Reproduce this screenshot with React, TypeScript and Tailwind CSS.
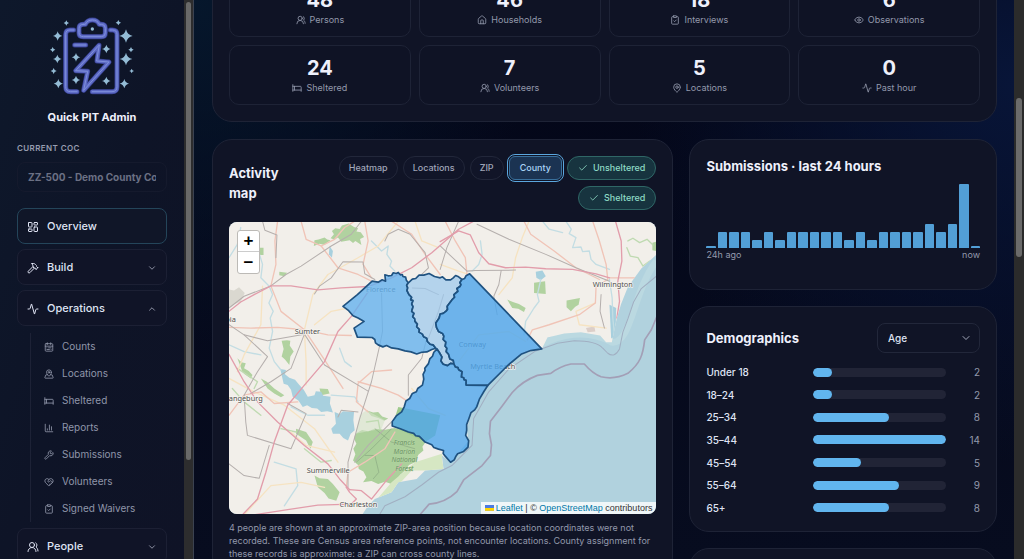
import React from 'react'
import {
  Activity,
  Bed,
  CalendarRange,
  ChartColumn,
  Check,
  ChevronDown,
  ChevronUp,
  ClipboardCheck,
  Eye,
  Hammer,
  HeartHandshake,
  House,
  LayoutDashboard,
  MapPin,
  MapPinned,
  UsersRound,
  Wrench,
  type LucideIcon,
} from 'lucide-react'

interface Stat {
  value: number
  label: string
  icon: LucideIcon
}

const stats: Stat[] = [
  { value: 48, label: 'Persons', icon: UsersRound },
  { value: 46, label: 'Households', icon: House },
  { value: 18, label: 'Interviews', icon: ClipboardCheck },
  { value: 6, label: 'Observations', icon: Eye },
  { value: 24, label: 'Sheltered', icon: Bed },
  { value: 7, label: 'Volunteers', icon: UsersRound },
  { value: 5, label: 'Locations', icon: MapPin },
  { value: 0, label: 'Past hour', icon: Activity },
]

const operations: { label: string; icon: LucideIcon }[] = [
  { label: 'Counts', icon: CalendarRange },
  { label: 'Locations', icon: MapPinned },
  { label: 'Sheltered', icon: Bed },
  { label: 'Reports', icon: ChartColumn },
  { label: 'Submissions', icon: Wrench },
  { label: 'Volunteers', icon: HeartHandshake },
  { label: 'Signed Waivers', icon: ClipboardCheck },
]

const hourly = [0, 2, 2, 2, 1, 2, 1, 2, 2, 2, 2, 2, 1, 2, 1, 2, 2, 2, 2, 3, 2, 3, 8, 0]

const ages = [
  { label: 'Under 18', count: 2 },
  { label: '18–24', count: 2 },
  { label: '25–34', count: 8 },
  { label: '35–44', count: 14 },
  { label: '45–54', count: 5 },
  { label: '55–64', count: 9 },
  { label: '65+', count: 8 },
]

const Sparkle = ({ x, y, r }: { x: number; y: number; r: number }) => (
  <path
    transform={`translate(${x} ${y}) scale(${r})`}
    d="M0-1Q.18-.18 1 0Q.18.18 0 1Q-.18.18-1 0Q-.18-.18 0-1Z"
  />
)

const Logo = () => (
  <svg viewBox="150 48 252 234" className="h-[78px] w-[84px]" fill="none" aria-hidden="true">
    {[
      { color: '#343d8c', width: 15 },
      { color: '#5d6ac4', width: 11 },
      { color: '#7f90dc', width: 3 },
    ].map(({ color, width }) => (
      <g key={color} stroke={color} strokeWidth={width} strokeLinecap="round" strokeLinejoin="round">
        <path d="M221 87H210Q197 87 197 100V257Q197 272 212 272H231" />
        <path d="M331 87H337Q351 87 351 100V257Q351 272 336 272H277" />
        <path d="M250 70H256Q262 57 277 57Q292 57 298 70H304Q316 70 316 82V95Q316 107 304 107H250Q237 107 237 95V82Q237 70 250 70Z" />
        <path d="M297 133L227 209L263 211L251 268L327 183L291 180Z" />
        <path d="M224 132H257" />
      </g>
    ))}
    <g fill="#94bcd6">
      <circle cx="277" cy="84" r="5" />
      <Sparkle x={173} y={105} r={14} />
      <Sparkle x={378} y={105} r={20} />
      <Sparkle x={172} y={174} r={13} />
      <Sparkle x={378} y={174} r={19} />
      <Sparkle x={175} y={248} r={14} />
      <Sparkle x={373} y={248} r={14} />
      <Sparkle x={228} y={169} r={13} />
      <Sparkle x={319} y={144} r={13} />
      <Sparkle x={228} y={237} r={13} />
      <Sparkle x={319} y={240} r={13} />
      <Sparkle x={199} y={66} r={8} />
      <Sparkle x={355} y={65} r={8} />
      <Sparkle x={158} y={146} r={8} />
      <Sparkle x={393} y={146} r={8} />
      <Sparkle x={161} y={210} r={9} />
      <Sparkle x={395} y={210} r={7} />
    </g>
  </svg>
)

interface NavButtonProps {
  label: string
  icon: LucideIcon
  active?: boolean
  chevron?: 'up' | 'down'
}

const NavButton: React.FC<NavButtonProps> = ({ label, icon: Icon, active = false, chevron }) => (
  <button
    type="button"
    className={`flex h-9 w-full shrink-0 items-center gap-2 rounded-lg border px-[9px] pt-px text-left text-[11px] font-medium text-[#dfe3f3] ${
      active ? 'border-[#24455a] bg-[#101628]' : 'border-[#1c2034] bg-[#101427]'
    }`}
  >
    <Icon className="size-3" strokeWidth={2} />
    <span className="flex-1">{label}</span>
    {chevron === 'down' && <ChevronDown className="size-[10px] text-[#a3a8ba]" />}
    {chevron === 'up' && <ChevronUp className="size-[10px] text-[#a3a8ba]" />}
  </button>
)

const Sidebar = () => (
  <aside className="flex w-[184px] shrink-0 flex-col overflow-hidden bg-linear-to-br from-[#0e182b] via-[#0e1427] to-[#0f1326] px-[17px] pt-[17px]">
    <div className="flex flex-col items-center">
      <Logo />
      <p className="mt-[14px] text-[11px] leading-4 font-bold text-[#eef0fb]">Quick PIT Admin</p>
    </div>
    <label htmlFor="coc" className="mt-[17px] text-[8px] leading-3 font-semibold tracking-wider text-[#979db0]">
      CURRENT COC
    </label>
    <select
      id="coc"
      disabled
      className="mt-2 h-[30px] w-full shrink-0 appearance-none rounded-lg border border-[#151a2d] bg-transparent px-[10px] text-[10px] font-bold text-[#6b7084] opacity-100"
    >
      <option>ZZ-500 - Demo County CoC</option>
    </select>
    <nav className="mt-4 flex flex-col gap-[5px]">
      <NavButton label="Overview" icon={LayoutDashboard} active />
      <NavButton label="Build" icon={Hammer} chevron="down" />
      <NavButton label="Operations" icon={Activity} chevron="up" />
      <ul className="mt-[2px] mb-px ml-[13px] border-l border-[#1d2236]">
        {operations.map(({ label, icon: Icon }) => (
          <li key={label}>
            <a href="#" className="flex h-[27px] items-center gap-2 pl-[13px] text-[10px] text-[#9096aa]">
              <Icon className="size-[10px]" strokeWidth={2} />
              {label}
            </a>
          </li>
        ))}
      </ul>
      <NavButton label="People" icon={UsersRound} chevron="down" />
    </nav>
  </aside>
)

const roads = {
  motorway: [
    'M15 290L50 262L90 240L140 214L200 214L280 226L350 220L430 216L500 190L560 160L620 115L660 80L700 45L745 21',
    'M645 82L700 50L735 62L760 115L790 148L840 160L900 158L960 163L1040 165L1110 178L1150 190',
    'M55 897L100 850L125 770L150 680L190 570L240 510L300 440L340 350L380 305L430 232',
    'M15 418L60 500L100 560L160 620L240 690L310 745L345 790L375 822',
    'M1168 21L1185 80L1187 140L1175 200L1180 260L1172 310',
    'M375 822L410 825L440 850L480 800L530 745',
    'M365 815L375 830L395 850L380 865L280 868L200 880L90 897',
  ],
  primary: [
    'M160 21L152 80L155 150L140 214L170 290L240 345L300 435L355 520',
    'M230 21L245 75L290 95L340 160L400 180L440 200',
    'M15 338L80 340L160 338L240 345L310 360L380 362',
    'M420 21L430 80L415 150L440 190',
    'M290 95L330 75L360 40L390 21',
    'M895 21L915 60L985 110L1050 160L1120 195',
    'M1100 21L1120 80L1140 150L1145 195L1110 215L1108 265L1060 300L970 330L920 345L905 375',
    'M1150 190L1230 190L1260 160L1290 130',
    'M15 600L60 540L110 530L150 565L220 560',
    'M500 465L440 470L400 505L395 560L430 590',
    'M500 21L560 60L600 120L645 180',
    'M660 21L690 80L720 130L725 180',
    'M365 815L370 770L420 740L480 700L510 650',
    'M400 500L470 520L520 540L550 560',
  ],
  secondary: [
    'M240 345L265 240L310 180L400 130L460 95L520 21',
    'M240 350L245 440L245 510',
    'M15 490L90 530L180 570L270 640L340 740',
    'M270 330L320 290L370 280',
    'M60 897L140 810L230 800L300 815',
    'M200 650L245 690L330 710',
    'M115 215L110 330L60 420L40 470',
    'M910 21L890 70L870 130L860 190L820 240',
    'M1108 265L1050 290L1060 330L1140 340',
    'M700 440L760 360L850 350L900 380',
    'M560 520L610 580L660 600',
    'M645 150L700 170L730 180',
    'M570 21L590 80L640 100',
  ],
  rail: [
    'M115 21L122 48L158 62L155 130',
    'M140 214L185 180L230 155L320 95L380 60L410 21',
    'M15 280L60 245L140 214',
    'M15 330L60 360L130 425L100 470L60 540L65 620L70 660L200 700L245 595L190 565',
    'M60 360L130 378L240 358L300 450L430 528',
    'M240 358L200 460L140 500L80 535',
    'M465 390L440 500L405 610L370 740L370 815',
    'M605 370L590 430L550 480L550 540',
    'M480 80L490 60L520 45L555 60L600 115L610 160L590 180',
    'M270 238L285 215L320 190L355 142L415 143L420 178L450 195',
    'M645 165L665 100L700 21',
    'M755 30L850 75L960 120L1050 160L1150 200',
    'M645 95L725 170L750 168L870 167',
    'M827 168L820 210L805 245L815 300',
    'M1125 240L1122 290L1135 340',
    'M340 605L350 585L400 590',
    'M470 235L473 350L465 390',
    'M15 745L60 780L105 788L135 690',
    'M500 620L430 690L390 740',
    'M562 220L600 222L640 240',
    'M655 240L640 290L610 370',
  ],
  river: [
    'M135 215L145 240L134 265L147 290L138 310L145 350L135 400L150 440L170 465',
    'M100 100L115 150L110 190L135 215',
    'M440 80L470 110L490 95L486 120L500 140L495 155L510 170',
    'M765 80L770 120L760 150L740 170',
    'M1020 21L1036 45L1030 58L1050 70L1040 100L1065 98L1070 112L1090 110L1095 135L1110 150L1150 165',
    'M950 21L970 45L1010 55',
    'M1150 195L1158 250L1160 310L1165 360',
    'M945 195L935 240L940 260L925 280L900 320L895 360',
    'M15 390L60 410L110 420',
    'M345 400L360 440L380 455',
    'M200 575L250 600L300 600',
    'M150 740L215 760L220 810L180 870',
    'M320 540L390 545L400 560',
    'M15 130L40 90L50 40',
  ],
}

const greens = [
  'M322 50L332 42L345 44L352 34L372 28L388 38L400 42L395 52L408 54L418 68L406 74L410 92L392 80L385 86L375 78L350 82L340 70L330 76L318 72L328 60Z',
  'M270 78L282 76L300 70L308 76L318 78L306 86L300 92L285 88L268 95Z',
  'M103 100L118 100L118 122L103 122Z',
  'M172 378L188 376L198 378L196 392L208 410L198 425L195 450L182 434L172 425L178 402Z',
  'M165 172L188 175L180 185L165 182Z',
  'M925 205L958 200L960 238L925 235Z',
  'M1022 258L1062 250L1058 270L1048 276L1035 290L1022 278Z',
  'M845 255L862 262L880 268L900 280L895 292L878 282L860 280Z',
  'M215 640L245 650L265 680L258 700L245 675L215 655Z',
  'M270 780L285 788L310 790L325 805L345 830L335 855L312 848L300 832L280 815Z',
  'M40 430L52 442L65 445L60 460L74 468L85 480L80 490L62 478L55 470Z',
  'M110 490L128 500L150 520L180 540L170 546L150 535L130 520Z',
  'M425 585L445 592L460 590L472 604L490 610L478 616L460 608L440 602Z',
  'M1278 85L1290 82L1290 110L1278 108Z',
  'M285 520L310 522L315 535L290 540Z',
]

const counties = [
  {
    name: 'Florence',
    fill: '#64b1ed',
    opacity: 0.8,
    d: 'M480 181L490 184L500 183L505 175L514 177L520 174L526 181L532 180L534 186L542 188L544 197L550 205L545 212L548 220L546 228L552 240L560 248L557 255L564 258L560 268L564 276L560 290L567 296L563 306L569 312L570 320L577 328L575 336L583 344L582 352L592 358L596 366L605 370L607 380L615 388L624 390L632 400L620 404L605 411L590 412L575 417L558 411L540 408L520 402L500 399L485 392L474 396L460 390L452 384L450 374L442 368L398 367L388 340L418 320L400 310L385 303L372 288L355 275L398 240L442 200L460 203L472 196L482 200Z',
  },
  {
    name: 'Marion',
    fill: '#9bc8ed',
    opacity: 0.72,
    d: 'M550 205L562 194L572 192L582 182L596 182L612 177L628 186L645 190L652 187L662 196L676 196L684 190L691 183L700 187L710 195L704 204L707 210L704 216L695 222L698 230L686 240L688 248L680 256L666 275L667 284L662 290L654 296L645 298L642 310L632 325L634 338L640 350L652 356L656 364L654 374L662 382L660 394L665 400L663 410L670 418L674 432L684 436L686 447L676 445L667 452L654 448L647 438L650 426L642 412L634 404L632 400L624 390L615 388L607 380L605 370L596 366L592 358L582 352L583 344L575 336L577 328L570 320L569 312L563 306L567 296L560 290L564 276L560 268L564 258L557 255L560 248L552 240L546 228L548 220L545 212Z',
  },
  {
    name: 'Horry',
    fill: '#4fa6ec',
    opacity: 0.82,
    d: 'M733 178L948 402L915 407L888 417L848 450L787 511L722 510L722 496L716 494L715 488L708 486L710 470L700 464L698 458L690 456L686 447L684 436L674 432L670 418L663 410L665 400L660 394L662 382L654 374L656 364L652 356L640 350L634 338L632 325L642 310L645 298L654 296L662 290L667 284L666 275L680 256L688 248L686 240L698 230L695 222L704 216L707 210L704 204L710 195L718 192L722 184Z',
  },
  {
    name: 'Georgetown',
    fill: '#4fa6ec',
    opacity: 0.8,
    d: 'M636 402L626 412L622 424L614 432L610 446L599 460L600 466L594 478L596 492L592 510L578 520L574 530L562 535L554 550L543 557L538 574L530 590L514 602L502 619L502 632L526 640L550 650L566 654L572 661L583 663L600 680L620 688L626 696L640 701L655 705L654 714L660 722L676 740L687 733L692 722L697 715L715 708L728 695L730 676L721 660L724 645L724 628L730 612L737 592L748 584L754 575L762 552L775 530L787 511L722 510L722 496L716 494L715 488L708 486L710 470L700 464L698 458L690 456L686 447L676 445L667 452L654 448L647 438L650 426L642 412Z',
  },
]

const MapCanvas = () => (
  <svg viewBox="15 21 1275 876" preserveAspectRatio="xMidYMid slice" className="block h-[292px] w-full" role="img" aria-label="County activity map">
    <defs>
      <clipPath id="land">
        <path d="M0 0H1300V112L1245 162L1205 217L1185 267L1172 310L1157 382L1140 382L1122 362L1065 352L1015 356L965 368L948 402L888 417L848 450L787 511L762 552L737 592L724 645L730 676L697 715L676 740L650 720L655 760L600 765L575 790L520 800L500 830L450 850L430 870L410 900H0Z" />
      </clipPath>
    </defs>
    <rect width="1300" height="900" fill="#b1d2de" />
    <path d="M1290 140C1220 230 1215 390 1157 382C1080 340 1000 360 945 390" stroke="#bbd9e1" strokeWidth="20" fill="none" />
    <g clipPath="url(#land)">
      <rect width="1300" height="900" fill="#f2efea" />
      <g fill="#b1d2a0">
        {greens.map((d) => (
          <path key={d} d={d} />
        ))}
      </g>
      <path
        d="M392 655L412 644L430 648L450 640L480 643L510 638L535 644L560 655L580 664L600 682L592 694L595 705L580 718L570 740L552 748L540 765L525 778L518 794L500 805L480 798L460 805L440 796L415 800L425 785L416 768L402 760L400 748L385 735L392 716L386 700L395 685L388 670Z"
        fill="#acd09b"
      />
      <path d="M392 655L405 600L425 585L480 615L470 640Z" fill="#d3e2c8" opacity=".6" />
      <path d="M570 740L650 715L655 765L560 765L500 830L440 870L500 800Z" fill="#d6e7c3" />
      <path d="M420 720L450 720L462 770L445 790M450 640L500 680L570 700M395 740L440 700L500 640" stroke="#8aa883" strokeWidth="2" fill="none" />
      <path d="M15 225L30 228L45 218L62 235L56 248L50 262L30 268L15 280Z" fill="#dad8d0" />
      <path d="M1080 340L1105 335L1108 350L1085 352Z" fill="#dccfc9" />
      <path d="M520 575L645 600L630 660L600 680L502 632Z" fill="#9fca8c" />
      <g fill="#a8d0de">
        <path d="M168 462L185 465L182 478L195 488L212 494L225 510L238 524L250 545L270 540L274 528L290 530L296 542L318 545L316 565L325 592L308 588L290 590L278 580L262 578L248 570L235 575L222 556L205 545L200 524L190 510L178 506Z" />
        <path d="M330 590L345 596L355 588L388 590L386 615L390 645L378 655L370 675L356 668L345 655L325 655L320 640L334 625Z" />
        <path d="M930 172L950 168L960 185L945 197L932 190Z" />
        <path d="M1150 270L1170 280L1168 370L1155 370Z" />
        <path d="M315 95L325 110L322 130L313 120Z" />
      </g>
      <g fill="none" strokeLinejoin="round" strokeLinecap="round">
        <g stroke="#c3dde3" strokeWidth="4">
          {roads.river.map((d) => (
            <path key={d} d={d} />
          ))}
        </g>
        <path
          d="M1205 80L1220 72L1240 85L1262 75L1280 92M1202 100L1212 125L1235 130L1250 155L1270 140L1285 150M25 520L60 560L110 600M40 460L100 500L90 520M240 700L290 740L320 735M170 640L215 650M425 620L460 615L465 640"
          stroke="#bfdab1"
          strokeWidth="4"
        />
        <g stroke="#f6e3c2" strokeWidth="4">
          {roads.secondary.map((d) => (
            <path key={d} d={d} />
          ))}
        </g>
        <g stroke="#f0c4b7" strokeWidth="4">
          {roads.primary.map((d) => (
            <path key={d} d={d} />
          ))}
        </g>
        <g stroke="#b5afad" strokeWidth="3">
          {roads.rail.map((d) => (
            <path key={d} d={d} />
          ))}
        </g>
        <g stroke="#e29dab" strokeWidth="4">
          {roads.motorway.map((d) => (
            <path key={d} d={d} />
          ))}
        </g>
      </g>
    </g>
    <g fill="none" strokeLinejoin="round">
      <path
        d="M1290 185L1245 222L1222 262L1205 312L1190 352L1180 402Q1165 430 1145 415L1130 400Q1110 378 1045 378L995 385L930 408L850 462L790 530L745 610L740 690L680 750L640 770L590 808L540 843L480 870L462 900"
        stroke="#a1afc2"
        strokeWidth="3"
      />
      <path
        d="M1292 304L1275 345L1255 375C1250 420 1242 445 1205 475Q1165 495 1125 485Q1100 476 1075 447L1035 447Q1000 455 975 475L935 481Q890 498 860 532L830 572L795 618L792 655L798 688L795 720L770 750L715 793L695 828Q660 862 612 865L582 900"
        stroke="#a39fb6"
        strokeWidth="5"
      />
    </g>
    <g fontFamily="'Noto Sans', sans-serif" fontSize="22" fill="#4f4f4f" stroke="#f7f5f0" strokeWidth="4" strokeLinejoin="round" paintOrder="stroke" textAnchor="middle">
      <text x="468" y="231">Florence</text>
      <text x="741" y="397">Conway</text>
      <text x="802" y="462">Myrtle Beach</text>
      <text x="249" y="359">Sumter</text>
      <text x="1160" y="216">Wilmington</text>
      <text x="52" y="556">Orangeburg</text>
      <text x="311" y="771">Summerville</text>
      <text x="401" y="875">Charleston</text>
      <text x="-14" y="322">Columbia</text>
      <g fontSize="20" fontStyle="italic" fill="#68915f" stroke="#b9d8aa" strokeWidth="2">
        <text x="538" y="690">Francis</text>
        <text x="538" y="715">Marion</text>
        <text x="538" y="740">National</text>
        <text x="538" y="765">Forest</text>
      </g>
    </g>
    {counties.map(({ name, fill, opacity, d }) => (
      <path key={name} d={d} fill={fill} fillOpacity={opacity} stroke="#1f5280" strokeWidth="5" strokeLinejoin="round" />
    ))}
  </svg>
)

const layerClass = 'rounded-full border border-[#22273a] bg-[#111528] px-[9px] text-[#a0a5b8]'
const toggleClass =
  'flex h-6 items-center gap-[5px] rounded-full border border-[#2f6766] bg-[#17343f] px-[10px] text-[9px] font-medium text-[#8fdcc6]'

const ActivityMap = () => (
  <section className="rounded-[20px] border border-[#1e2336] bg-[#101426] p-4">
    <div className="flex items-center justify-between gap-3">
      <h2 className="w-16 text-[13px] leading-5 font-bold text-[#eef0fb]">Activity map</h2>
      <div className="flex flex-1 flex-wrap justify-end gap-x-[5px] gap-y-[6px]">
        {['Heatmap', 'Locations', 'ZIP'].map((label) => (
          <button key={label} type="button" className={`h-6 text-[9px] font-medium ${layerClass}`}>
            {label}
          </button>
        ))}
        <button
          type="button"
          aria-pressed="true"
          className="h-6 rounded-md border border-[#39709c] bg-[#1b3352] px-[10px] text-[9px] font-medium text-[#a9d3f6] outline outline-offset-1 outline-[#5ba7de]"
        >
          County
        </button>
        {['Unsheltered', 'Sheltered'].map((label) => (
          <button key={label} type="button" aria-pressed="true" className={toggleClass}>
            <Check className="size-[10px]" />
            {label}
          </button>
        ))}
      </div>
    </div>
    <div className="relative mt-3 overflow-hidden rounded-lg">
      <MapCanvas />
      <div className="absolute top-2 left-2 flex flex-col overflow-hidden rounded-[3px] border border-[#bcbab6] bg-white font-['Liberation_Sans',sans-serif] text-[17px] font-bold text-black">
        <button type="button" aria-label="Zoom in" className="flex h-[21px] w-[21px] items-center justify-center border-b border-[#ccc]">
          +
        </button>
        <button type="button" aria-label="Zoom out" className="flex h-[21px] w-[21px] items-center justify-center">
          −
        </button>
      </div>
      <div className="absolute right-0 bottom-0 flex h-3 items-center gap-[2px] bg-white/80 px-1 font-['Liberation_Sans',sans-serif] text-[9px] leading-3 text-[#333]">
        <svg viewBox="0 0 12 8" className="h-[6px] w-[9px]" aria-hidden="true">
          <path fill="#4c7be1" d="M0 0h12v4H0z" />
          <path fill="#ffd500" d="M0 4h12v3H0z" />
          <path fill="#e0bc00" d="M0 7h12v1H0z" />
        </svg>
        <span>
          <a href="#" className="text-[#0078a8]">Leaflet</a> | ©{' '}
          <a href="#" className="text-[#0078a8]">OpenStreetMap</a> contributors
        </span>
      </div>
    </div>
    <p className="mt-[7px] text-[9px] leading-[13px] text-[#9399ac]">
      4 people are shown at an approximate ZIP-area position because location coordinates were not recorded. These are
      Census area reference points, not encounter locations. County assignment for these records is approximate: a ZIP
      can cross county lines.
    </p>
  </section>
)

const Submissions = () => {
  const max = Math.max(...hourly)

  return (
    <section className="rounded-[20px] border border-[#1e2336] bg-[#101426] px-4 pt-4 pb-[27px]">
      <h2 className="text-[13px] leading-5 font-bold text-[#eef0fb]">Submissions · last 24 hours</h2>
      <div className="mt-2 flex h-16 items-end gap-[2px]">
        {hourly.map((count, index) => (
          <div
            key={index}
            className="min-h-[2px] flex-1 rounded-t-[1px] bg-[#529fd6]"
            style={{ height: `${(count / max) * 100}%` }}
          />
        ))}
      </div>
      <div className="flex justify-between text-[9px] leading-[14px] text-[#9399ac]">
        <span>24h ago</span>
        <span>now</span>
      </div>
    </section>
  )
}

const Demographics = () => {
  const max = Math.max(...ages.map((age) => age.count))

  return (
    <section className="rounded-[20px] border border-[#1e2336] bg-[#101426] p-4">
      <div className="flex items-center justify-between">
        <h2 className="text-[13px] leading-5 font-bold text-[#eef0fb]">Demographics</h2>
        <div className="relative">
          <select
            aria-label="Group by"
            className="h-[30px] w-[103px] appearance-none rounded-lg border border-[#22273a] bg-[#101426] px-[10px] text-[10px] font-medium text-[#dfe3f3]"
          >
            <option>Age</option>
          </select>
          <ChevronDown className="pointer-events-none absolute top-[9px] right-2 size-3 text-[#a3a8ba]" />
        </div>
      </div>
      <ul className="mt-3 flex h-[150px] flex-col justify-between">
        {ages.map(({ label, count }) => (
          <li key={label} className="grid grid-cols-[99px_1fr_26px] items-center gap-2 text-[10px] leading-[14px]">
            <span className="font-medium text-[#dfe3f3]">{label}</span>
            <span className="h-[9px] overflow-hidden rounded-full bg-[#212436]">
              <span className="block h-full rounded-full bg-[#61b5ee]" style={{ width: `${(count / max) * 100}%` }} />
            </span>
            <span className="text-right text-[#9399ac]">{count}</span>
          </li>
        ))}
      </ul>
    </section>
  )
}

const App = () => (
  <div className="flex h-screen overflow-hidden bg-[#030718] font-['Inter',sans-serif]">
    <Sidebar />
    <div className="w-[10px] shrink-0 border-r border-[#3b4250] bg-[#2d2d2e] px-[2px] pt-[2px]">
      <div className="h-[458px] rounded-full bg-[#696969]" />
    </div>
    <main className="min-w-0 flex-1 overflow-hidden bg-[radial-gradient(circle_at_0%_0%,#06172c,transparent_35%),radial-gradient(circle_at_100%_15%,#081538,transparent_40%),linear-gradient(#030618,#070c1f)] pr-[17px] pl-[18px]">
      {/* scrolled part way down, so the first row of tiles is cut off */}
      <div className="-mt-10 flex flex-col gap-[17px]">
        <section className="rounded-[20px] border border-[#1e2336] bg-[#101426] p-4">
          <div className="grid grid-cols-4 gap-2">
            {stats.map(({ value, label, icon: Icon }) => (
              <div key={label} className="flex h-[60px] flex-col items-center justify-center rounded-[10px] border border-[#1e2336] bg-[#0f1325] pt-[2px]">
                <span className="text-[20px] leading-6 font-bold text-[#eef0fb]">{value}</span>
                <span className="flex items-center gap-1 text-[9px] leading-4 text-[#9399ac]">
                  <Icon className="size-[10px]" />
                  {label}
                </span>
              </div>
            ))}
          </div>
        </section>
        <div className="grid grid-cols-[3fr_2fr] items-start gap-4">
          <ActivityMap />
          <div className="flex flex-col gap-4">
            <Submissions />
            <Demographics />
            <section className="h-40 rounded-[20px] border border-[#1e2336] bg-[#101426]" />
          </div>
        </div>
      </div>
    </main>
    <div className="w-[10px] shrink-0 bg-[#2b2b2b] px-[2px] pt-[98px]">
      <div className="h-[159px] rounded-full bg-[#6b6b6b]" />
    </div>
  </div>
)

export default App
